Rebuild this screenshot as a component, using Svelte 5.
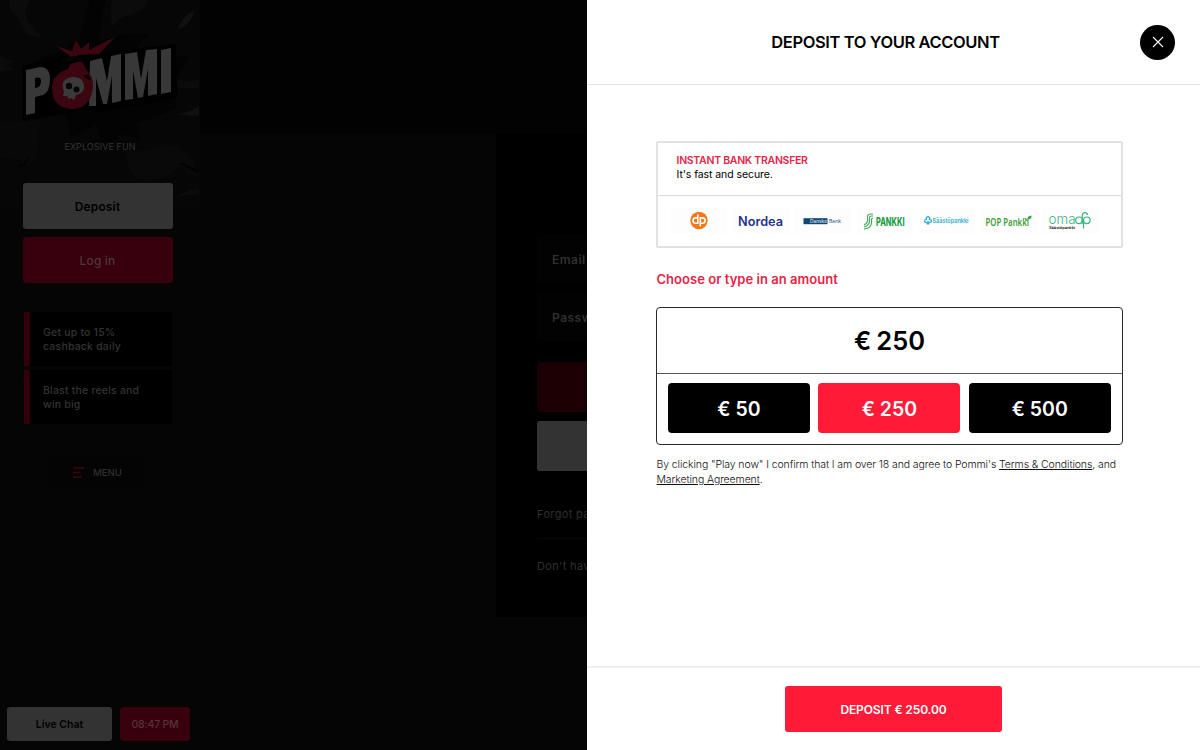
<script>
  const presets = [50, 250, 500];
  let amount = $state(250);
</script>

<div class="page">
  <aside class="sidebar">
    <svg class="texture" width="200" height="210" viewBox="0 0 200 210" aria-hidden="true">
      <rect width="200" height="210" fill="#060606" />
      <g fill="#0b0b0b">
        <path d="M10 0H30L25 12Q26 24 43 37Q28 39 23 29Q18 16 10 9Z" />
        <path d="M112 0H149Q143 12 132 14Q118 17 112 27Q110 12 112 0Z" />
        <path d="M177 30Q183 15 194 11Q192 24 177 30Z" fill="#101010" />
        <path d="M0 56L14 61L6 66L18 69L0 71Z" />
        <path d="M176 79Q190 84 199 79V88L178 88Z" />
        <path d="M174 114Q187 114 199 106V116L186 115Z" fill="#101010" />
        <path d="M0 121L40 120L38 156L28 167L19 160L0 158Z" fill="#080808" />
        <path d="M126 148Q134 156 164 144Q188 148 194 163L199 178L187 173Q184 168 179 166Q167 182 144 180Q126 178 126 148Z" fill="#090909" />
        <path d="M174 199Q185 190 199 188V194L180 196Z" />
      </g>
      <path d="M80 38L90 0H105L98 43Q126 31 148 34L133 51L190 57L171 86L177 108L136 124L140 140L122 134L103 151L97 124L70 138L66 113L23 121L23 67L65 48Z" fill="#030303" />
      <path d="M28 158Q24 168 18 166M180 163L198 172" stroke="#030303" stroke-width="2" fill="none" />
    </svg>

    <svg class="logo" width="200" height="140" viewBox="0 0 200 140" role="img" aria-label="Pommi">
      <path d="M22 66L58 58L65 50L76 56L176 44L177 98L100 112L88 109L65 113L23 121Z" fill="#000" />
      <path d="M56 46L72 51L76 40L81 49L89 42L89 50L115 37L99 54L78 55L71 60L62 62L70 56Z" fill="#3b0610" />
      <path fill-rule="evenodd" d="M26 70L40 67Q50 67 50 79Q50 92 43 95L35 97V113L26 115ZM35 78V88Q41 88 41 81Q41 76 35 78Z" fill="#383838" />
      <path d="M90 61L102 58L107 81L111 56L121 54V101L112 103V76L107 104L103 104L96 78V106L89 106Z" fill="#383838" />
      <path d="M125 54L137 52L141 79L146 50L157 49V94L148 96V69L143 97L138 98L133 71V99L125 100Z" fill="#383838" />
      <path d="M161 50L171 48V92L161 94Z" fill="#383838" />
      <path d="M70 64L82 61L86 69Q94 77 93 87Q91 108 73 109Q53 109 52 89Q52 74 68 69Z" fill="#3b0610" />
      <path d="M63 62Q72 54 83 61" fill="none" stroke="#050505" stroke-width="3" />
      <path d="M83 76L88 74L91 80L87 79Z" fill="#050505" />
      <path d="M72 77Q84 76 84 87Q84 93 76 95L74 100L71 98L69 99L67 96L63 96L64 92Q59 79 72 77Z" fill="#3a3a3a" />
      <circle cx="69" cy="86" r="3.2" fill="#050505" />
      <circle cx="76.500" cy="89.500" r="3" fill="#050505" />
    </svg>
    <div class="tagline">EXPLOSIVE FUN</div>
    <button class="side-btn white">Deposit</button>
    <button class="side-btn red">Log in</button>
    <div class="promos">
      <div class="promo">Get up to 15%<br />cashback daily</div>
      <div class="promo">Blast the reels and<br />win big</div>
    </div>
    <div class="menu">
      <svg width="11" height="11" viewBox="0 0 11 11"><path d="M0 1H11M0 5.500H7.500M0 10H9" stroke="#3b0610" stroke-width="1.300" /></svg>
      <span>MENU</span>
    </div>
    <div class="bottom">
      <button class="chat">Live Chat</button>
      <div class="clock">08:47 PM</div>
    </div>
  </aside>

  <main class="behind">
    <div class="login">
      <div class="field">Email</div>
      <div class="field">Password</div>
      <div class="bar dim"></div>
      <div class="bar light"></div>
      <div class="link">Forgot password?</div>
      <div class="rule"></div>
      <div class="link">Don't have an account?</div>
    </div>
  </main>

  <section class="drawer">
    <header>
      <h1>DEPOSIT TO YOUR ACCOUNT</h1>
      <button class="close" aria-label="Close">
        <svg width="12" height="12" viewBox="0 0 12 12"><path d="M1 1L11 11M11 1L1 11" stroke="#fff" stroke-width="1.100" /></svg>
      </button>
    </header>

    <div class="content">
      <div class="method">
        <div class="method-head">
          <strong>INSTANT BANK TRANSFER</strong>
          <span>It's fast and secure.</span>
        </div>
        <div class="banks">
          <svg viewBox="0 0 56 26">
            <circle cx="28" cy="12.500" r="8.700" fill="#f47718" />
            <g fill="none" stroke="#fff" stroke-width="1.600"><path d="M26.800 6.500V15.300H24.700A2.700 2.700 0 0 1 24.700 9.900H26.800" /><path d="M29.300 18.500V9.900H31.400A2.700 2.700 0 0 1 31.400 15.300H29.300" /></g>
          </svg>
          <svg viewBox="0 0 56 26"><text x="5" y="17.500" textLength="45" lengthAdjust="spacingAndGlyphs" font-size="12.500" font-weight="600" fill="#27348b">Nordea</text></svg>
          <svg viewBox="0 0 56 26">
            <rect x="8.500" y="10.200" width="24" height="6" fill="#114775" />
            <text x="15" y="15" textLength="17" lengthAdjust="spacingAndGlyphs" font-size="4.500" fill="#fff">Danske</text>
            <text x="34" y="15" textLength="12" lengthAdjust="spacingAndGlyphs" font-size="4.500" fill="#114775">Bank</text>
          </svg>
          <svg viewBox="0 0 56 26">
            <g fill="none" stroke="#3bab59" stroke-width="1.100"><path d="M16 6H14Q10 6 10.500 9.500Q11.500 14 8.500 16L7 17" /><path d="M16 8H14.500Q12.200 8 12.600 10.500Q13.300 15.500 9.500 18L7 19" /><path d="M16 10.200Q14.300 10.200 14.600 12Q15 18 11 20L7 21" /></g>
            <text x="19" y="17.500" textLength="28.500" lengthAdjust="spacingAndGlyphs" font-size="12" font-weight="800" fill="#229f48">PANKKI</text>
          </svg>
          <svg viewBox="0 0 56 26">
            <path d="M8.300 15.800V14Q5.500 15 5.500 13Q5.700 11.300 7.500 11.500Q6.700 9 9 8.700Q11.300 9 10.500 11.500Q12.300 11.300 12.500 13Q12.500 15 9.700 14V15.800Z" fill="none" stroke="#21a9d2" stroke-width="1.200" />
            <text x="13.500" y="15.300" textLength="36" lengthAdjust="spacingAndGlyphs" font-size="5.800" font-weight="600" fill="#35acd0">Säästöpankki</text>
          </svg>
          <svg viewBox="0 0 56 26">
            <text x="4.500" y="18" textLength="43.500" lengthAdjust="spacingAndGlyphs" font-size="10" font-weight="600" font-family="'Noto Sans', sans-serif" fill="#3d9f37">POP Pankkı</text>
            <path d="M46.500 11.500Q46 8 50.500 7.500Q51 10.500 47.500 11.500L46.800 13Q46 10 43.500 9.800Q43.300 12 46.500 12.700Z" fill="#3d9f37" />
          </svg>
          <svg viewBox="0 0 56 26">
            <text x="5.500" y="16" textLength="27" lengthAdjust="spacingAndGlyphs" font-size="14" font-weight="300" fill="#3ab682">oma</text>
            <g fill="none" stroke="#3ab682" stroke-width="1.200"><circle cx="36" cy="12.300" r="3.300" /><circle cx="43.800" cy="12.300" r="3.300" /><path d="M39.300 15.800V8.500Q39.300 4.700 42 4.700Q44.300 4.700 44.500 7M40.500 20.500V12.300" /></g>
            <text x="6" y="20.800" textLength="26" lengthAdjust="spacingAndGlyphs" font-size="3.400" font-weight="700" fill="#333">Säästöpankki</text>
          </svg>
        </div>
      </div>

      <h2>Choose or type in an amount</h2>

      <div class="amount-box">
        <div class="amount"><span>€</span><span>{amount}</span></div>
        <div class="presets">
          {#each presets as value}
            <button class:active={value === amount} onclick={() => (amount = value)}>€ {value}</button>
          {/each}
        </div>
      </div>

      <p class="terms">
        By clicking "Play now" I confirm that I am over 18 and agree to Pommi's <u>Terms &amp; Conditions</u>, and<br />
        <u>Marketing Agreement</u>.
      </p>
    </div>

    <footer><button class="submit">DEPOSIT € {amount.toFixed(2)}</button></footer>
  </section>
</div>

<style>
  :global(body) { margin: 0; background: #030303; overflow: hidden; }
  * { box-sizing: border-box; }
  button { font: inherit; border: 0; padding: 0; white-space: nowrap; }
  .page { width: 1200px; height: 750px; display: grid; grid-template-columns: 200px 387px 613px; font-family: Inter, sans-serif; overflow: hidden; }

  .sidebar { position: relative; display: flex; flex-direction: column; background: #050505; height: 750px; }
  .texture { position: absolute; left: 0; top: 0; filter: blur(0.6px); }
  .logo { position: relative; display: block; flex: none; }
  .tagline { position: relative; height: 14px; line-height: 14px; text-align: center; font-size: 9px; letter-spacing: 0.080px; color: #333; }
  .side-btn { position: relative; width: 150px; height: 46px; margin: 29px 0 0 22.500px; border-radius: 3px; font-size: 12px; letter-spacing: 0.150px; }
  .side-btn.white { background: #333; color: #000; font-weight: 600; }
  .side-btn.red { background: #38000c; color: #4b383b; margin-top: 8px; font-weight: 500; }
  .promos { display: grid; gap: 4px; margin: 29px 28px 0 24px; }
  .promo { height: 54px; padding: 14px 0 0 13px; border-left: 6px solid #31000a; background: #000; color: #333; font-size: 10.500px; line-height: 14.300px; font-weight: 500; letter-spacing: 0.200px; white-space: nowrap; }
  .menu { display: flex; align-items: center; gap: 9px; width: 96px; height: 34px; margin: 31px 0 0 49px; padding-left: 24px; background: #040404; color: #303030; font-size: 9.600px; font-weight: 500; }
  .bottom { display: flex; gap: 8px; margin: auto 10px 9px 7px; font-size: 10.500px; }
  .chat { width: 105px; height: 34px; border-radius: 3px; background: #333; color: #000; font-weight: 600; letter-spacing: 0; padding-top: 1px; }
  .clock { width: 70px; height: 34px; line-height: 35px; border-radius: 3px; text-align: center; background: #38000c; color: #56333a; font-weight: 500; letter-spacing: -0.2px; white-space: nowrap; }

  .behind { background: linear-gradient(#020202 0 134px, #050505 134px); padding: 134px 0 0 296px; overflow: hidden; }
  .login { width: 400px; height: 483px; background: #000; padding: 100px 0 0 41px; overflow: hidden; white-space: nowrap; }
  .field { height: 50px; margin-bottom: 8px; padding-left: 15px; line-height: 51px; background: #020202; color: #303030; font-size: 12px; font-weight: 600; letter-spacing: 0.500px; }
  .bar { height: 50px; border-radius: 3px; }
  .bar.dim { background: #1a0004; margin-top: 20px; }
  .bar.light { background: #333; margin-top: 9px; }
  .link { color: #303030; font-size: 11px; letter-spacing: 0.350px; line-height: 20px; margin-top: 33px; }
  .rule { height: 1px; background: #080808; margin-top: 14px; }
  .rule + .link { margin-top: 17px; }

  .drawer { background: #fff; display: grid; grid-template-columns: 613px; grid-template-rows: 85px 1fr 84px; height: 750px; }
  header { display: grid; grid-template-columns: 1fr 35px; align-items: center; border-bottom: 1px solid #e3e3e3; padding: 0 25px 0 44px; }
  h1 { margin: 0; font-size: 16.500px; line-height: 20px; font-weight: 600; letter-spacing: -0.400px; text-align: center; white-space: nowrap; }
  .close { width: 35px; height: 35px; border-radius: 50%; background: #000; display: grid; place-items: center; }
  .close svg { display: block; }
  .content { padding: 56px 76px 0 69px; }
  .method { height: 107px; border: 2px solid #e1e1e1; border-radius: 2px; width: 467px; }
  .method-head { height: 53px; border-bottom: 1px solid #dcdcdc; padding: 10px 0 0 18.500px; display: flex; flex-direction: column; font-size: 10.500px; line-height: 14.500px; letter-spacing: -0.080px; }
  .method-head strong { font-weight: 600; color: #e52548; letter-spacing: -0.280px; padding-top: 1px; line-height: 14px; }
  .banks { height: 50px; display: grid; grid-template-columns: repeat(7, 56px); gap: 6px; padding: 12px 0 0 12.700px; }
  .banks svg { width: 56px; height: 26px; display: block; background: #fdfdfd; }
  h2 { margin: 21px 0 0 0.500px; height: 20px; line-height: 20px; font-size: 13px; font-weight: 600; letter-spacing: 0.040px; color: #e52548; white-space: nowrap; }
  .amount-box { width: 467px; height: 138px; margin-top: 18px; border: 1px solid #29292b; border-radius: 4px; }
  .amount { height: 66px; border-bottom: 1px solid #55555b; display: flex; justify-content: center; align-items: center; gap: 5px; font-size: 25.500px; font-weight: 600; }
  .presets { display: grid; grid-template-columns: repeat(3, 142px); gap: 8.400px; padding: 9px 0 0 11px; }
  .presets button { height: 50px; border-radius: 4px; color: #fff; background: #000; font-size: 19.500px; font-weight: 600; padding-top: 2px; }
  .presets button.active { background: #ff1a38; }
  .terms { margin: 12px 0 0 0.500px; font-size: 10.500px; line-height: 15px; letter-spacing: -0.105px; color: #111; white-space: nowrap; font-weight: 300; }
  u { text-underline-offset: 1px; }
  footer { border-top: 2px solid #eee; padding: 18px 0 0 198px; }
  .submit { width: 217px; height: 46px; border-radius: 3px; color: #fff; background: #ff1a38; font-size: 12px; font-weight: 600; letter-spacing: -0.120px; }
</style>
